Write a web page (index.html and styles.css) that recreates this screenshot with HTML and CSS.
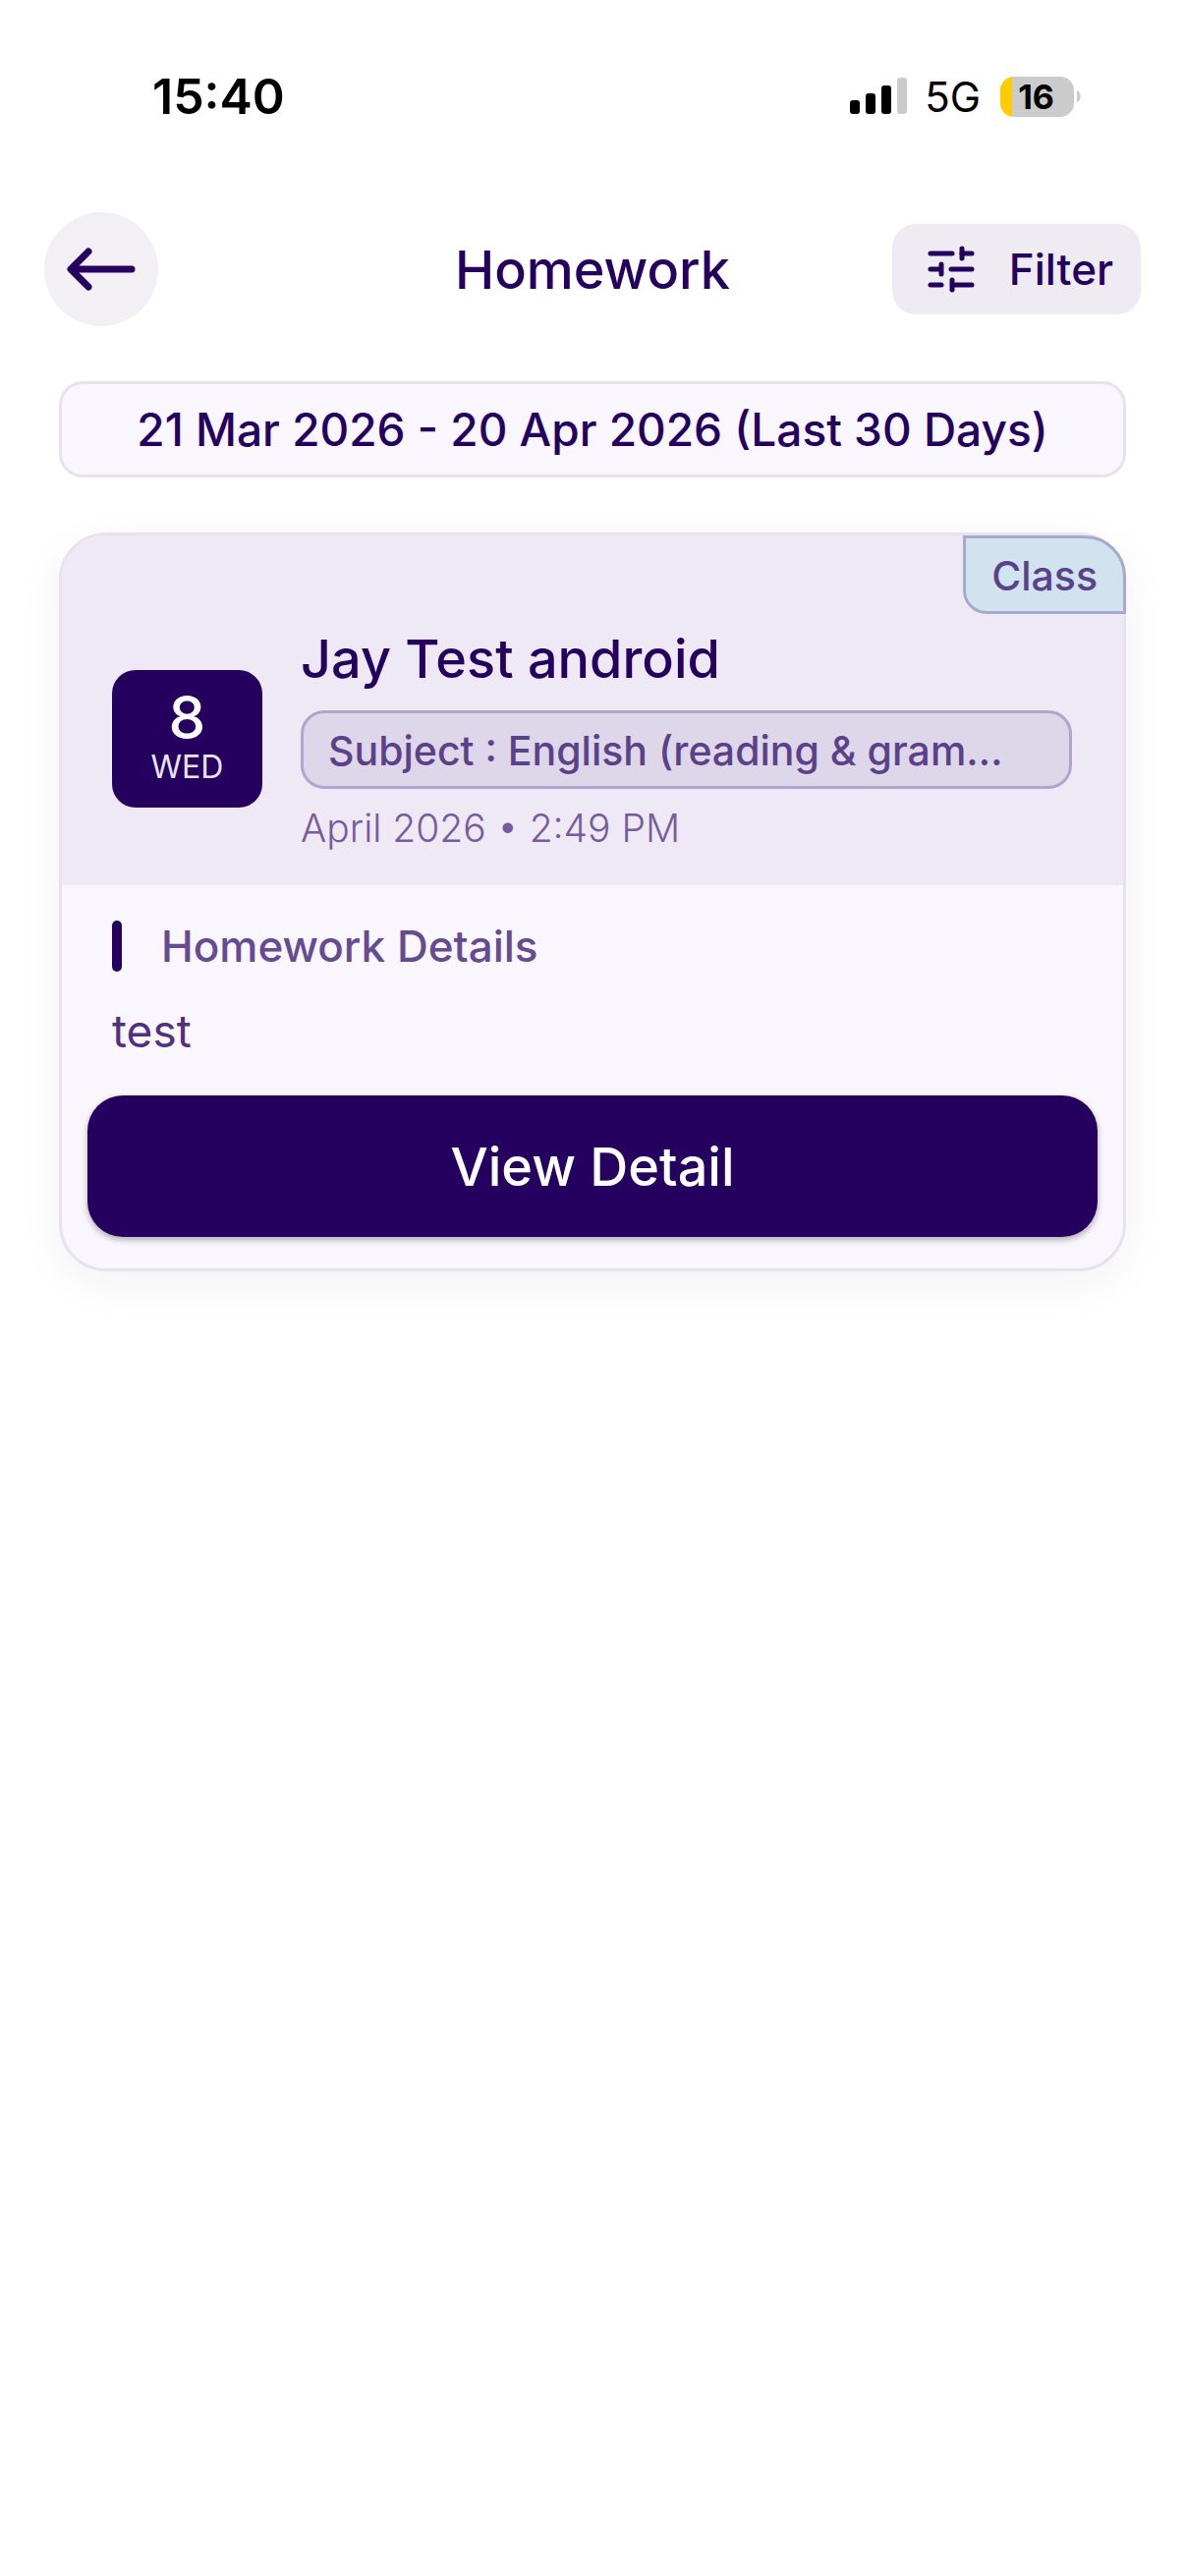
FILE: index.html
```html
<!DOCTYPE html>
<html lang="en">
<head>
    <meta charset="UTF-8">
    <title>Homework</title>
    <meta name="viewport" content="width=device-width, initial-scale=1.0">
    <link rel="stylesheet" href="styles.css">
</head>
<body>
    <div class="status-bar">
        <span class="status-time">15:40</span>
        <div class="status-icons">
            <svg class="signal" viewBox="0 0 58 38" aria-hidden="true">
                <rect x="0" y="23" width="10" height="14" rx="3"/>
                <rect x="16" y="16" width="10" height="21" rx="3"/>
                <rect x="32" y="8" width="10" height="29" rx="3"/>
                <rect x="48" y="0" width="10" height="37" rx="3" fill="#cbcbcb"/>
            </svg>
            <span class="network">5G</span>
            <div class="battery"><span class="battery-level">16</span></div>
            <svg class="battery-tip" viewBox="0 0 4 12" aria-hidden="true">
                <path d="M0 0c5 2 5 10 0 12z" fill="#cbcbcb"/>
            </svg>
        </div>
    </div>

    <header class="top-bar">
        <button class="back-button" aria-label="Back">
            <svg viewBox="0 0 72 44" aria-hidden="true">
                <path d="M67 22H6M23 4L5 22l18 18" fill="none" stroke="currentColor" stroke-width="7" stroke-linecap="round" stroke-linejoin="round"/>
            </svg>
        </button>
        <h1>Homework</h1>
        <button class="filter-button">
            <svg viewBox="0 0 49 49" aria-hidden="true">
                <g fill="none" stroke="currentColor" stroke-width="5" stroke-linecap="round">
                    <path d="M3 8h22M35 8h10M3 24h10M24 24h21M3 40h11M26 40h19"/>
                    <path d="M35 3v10M14 19v10M25 35v10"/>
                </g>
            </svg>
            Filter
        </button>
    </header>

    <main>
        <div class="date-range">21 Mar 2026 - 20 Apr 2026 (Last 30 Days)</div>

        <article class="card">
            <span class="tag">Class</span>
            <div class="card-header">
                <div class="day">
                    <span class="day-number">8</span>
                    <span class="day-name">WED</span>
                </div>
                <div class="card-info">
                    <h2>Jay Test android</h2>
                    <div class="subject">Subject : English (reading &amp; gram…</div>
                    <p class="card-date">April 2026 • 2:49 PM</p>
                </div>
            </div>
            <div class="card-body">
                <h3>Homework Details</h3>
                <p>test</p>
            </div>
            <button class="detail-button">View Detail</button>
        </article>
    </main>
</body>
</html>
```
FILE: styles.css
```css
* {
    box-sizing: border-box;
}
body {
    margin: 0;
    min-height: 100vh;
    font-family: Inter, "Open Sans", sans-serif;
    background-color: #fff;
    color: #25005f;
}
h1, h2, h3, p {
    margin: 0;
    font-weight: 500;
}
button {
    border: none;
    font-family: inherit;
    font-weight: 500;
    color: inherit;
    cursor: pointer;
}

/* Status bar */
.status-bar {
    display: flex;
    justify-content: space-between;
    align-items: center;
    height: 196px;
    padding: 0 106px 0 155px;
    color: #000;
}
.status-time {
    font-size: 50px;
    font-weight: 600;
}
.status-icons {
    display: flex;
    align-items: center;
}
.signal {
    width: 58px;
    height: 38px;
}
.network {
    margin: 0 20px 0 18px;
    font-size: 42px;
}
.battery {
    width: 75px;
    height: 41px;
    padding-right: 2px;
    border-radius: 14px;
    background: linear-gradient(to right, #ffcc00 12px, #cbcbcb 12px);
    line-height: 41px;
    text-align: center;
}
.battery-level {
    font-size: 34px;
    font-weight: 700;
}
.battery-tip {
    width: 4px;
    height: 12px;
    margin-left: 3px;
}

/* Header */
.top-bar {
    display: grid;
    grid-template-columns: 1fr auto 1fr;
    align-items: center;
    padding: 20px 45px 56px;
}
.back-button {
    display: flex;
    align-items: center;
    justify-content: center;
    width: 116px;
    height: 116px;
    padding: 0;
    border-radius: 50%;
    background-color: #f2eff5;
}
.back-button svg {
    width: 72px;
    height: 44px;
}
.top-bar h1 {
    font-size: 54px;
}
.filter-button {
    display: flex;
    align-items: center;
    justify-self: end;
    gap: 34px;
    height: 92px;
    padding: 0 28px 0 36px;
    border-radius: 24px;
    background-color: #eeebf3;
    font-size: 44px;
}
.filter-button svg {
    width: 49px;
    height: 49px;
}

/* Content */
main {
    padding: 0 60px 80px;
}
.date-range {
    padding: 16px;
    border: 3px solid #e8e1f0;
    border-radius: 24px;
    background-color: #f9f6fd;
    font-size: 46px;
    font-weight: 500;
    line-height: 60px;
    text-align: center;
}
.card {
    position: relative;
    margin-top: 56px;
    padding-bottom: 32px;
    border: 3px solid #e8e1f0;
    border-radius: 48px;
    background-color: #f9f6fd;
    box-shadow: 0 12px 48px rgba(37, 0, 95, 0.06);
}
.tag {
    position: absolute;
    top: 0;
    right: -3px;
    height: 80px;
    padding: 0 26px;
    border: 3px solid #a8aacd;
    border-radius: 0 42px 0 24px;
    background-color: #d2e3f0;
    color: #5b4189;
    font-size: 41px;
    font-weight: 500;
    line-height: 76px;
}
.card-header {
    display: flex;
    align-items: center;
    gap: 39px;
    padding: 92px 52px 34px 51px;
    border-radius: 45px 45px 0 0;
    background-color: #efe9f5;
}
.day {
    display: flex;
    flex-direction: column;
    align-items: center;
    flex-shrink: 0;
    width: 153px;
    height: 140px;
    padding-top: 16px;
    border-radius: 24px;
    background-color: #25005f;
    color: #fff;
}
.day-number {
    font-size: 60px;
    font-weight: 500;
    line-height: 64px;
}
.day-name {
    color: #e9e5ef;
    font-size: 32px;
    line-height: 38px;
}
.card-info {
    flex: 1;
    min-width: 0;
}
.card-info h2 {
    font-size: 54px;
    line-height: 68px;
}
.subject {
    height: 80px;
    margin-top: 18px;
    padding: 0 25px;
    border: 3px solid #b2a4cc;
    border-radius: 24px;
    background-color: #ded7e9;
    color: #5b4189;
    font-size: 41px;
    font-weight: 500;
    line-height: 76px;
    overflow: hidden;
    text-overflow: ellipsis;
    white-space: nowrap;
}
.card-date {
    margin-top: 16px;
    color: #765c9e;
    font-size: 39px;
    font-weight: 300;
    line-height: 48px;
}
.card-body {
    padding: 36px 51px 36px;
}
.card-body h3 {
    display: flex;
    align-items: center;
    gap: 40px;
    color: #664a92;
    font-size: 44px;
    line-height: 52px;
}
.card-body h3::before {
    content: "";
    width: 10px;
    height: 52px;
    border-radius: 5px;
    background-color: #25005f;
}
.card-body p {
    margin-top: 30px;
    color: #51317f;
    font-size: 46px;
    font-weight: 400;
    line-height: 60px;
}
.detail-button {
    display: block;
    width: calc(100% - 52px);
    height: 144px;
    margin: 0 26px;
    border-radius: 36px;
    background-color: #25005f;
    box-shadow: 0 3px 6px rgba(0, 0, 0, 0.3);
    color: #fff;
    font-size: 54px;
}
```
